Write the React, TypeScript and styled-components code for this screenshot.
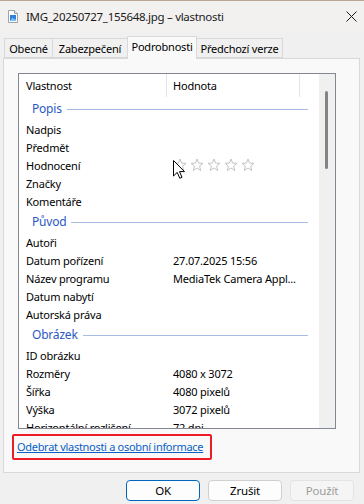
import React from "react";
import styled, { createGlobalStyle } from "styled-components";

const GlobalStyle = createGlobalStyle`
  html, body {
    margin: 0;
    padding: 0;
  }
  body {
    font-family: "Noto Sans", "Segoe UI", sans-serif;
    font-size: 11px;
    color: #000;
    background: #f0f0f0;
  }
`;

type PropRow =
  | { kind: "group"; label: string }
  | { kind: "prop"; name: string; value?: string; stars?: boolean };

const rows: PropRow[] = [
  { kind: "group", label: "Popis" },
  { kind: "prop", name: "Nadpis" },
  { kind: "prop", name: "Předmět" },
  { kind: "prop", name: "Hodnocení", stars: true },
  { kind: "prop", name: "Značky" },
  { kind: "prop", name: "Komentáře" },
  { kind: "group", label: "Původ" },
  { kind: "prop", name: "Autoři" },
  { kind: "prop", name: "Datum pořízení", value: "27.07.2025 15:56" },
  { kind: "prop", name: "Název programu", value: "MediaTek Camera Appl..." },
  { kind: "prop", name: "Datum nabytí" },
  { kind: "prop", name: "Autorská práva" },
  { kind: "group", label: "Obrázek" },
  { kind: "prop", name: "ID obrázku" },
  { kind: "prop", name: "Rozměry", value: "4080 x 3072" },
  { kind: "prop", name: "Šířka", value: "4080 pixelů" },
  { kind: "prop", name: "Výška", value: "3072 pixelů" },
  { kind: "prop", name: "Horizontální rozlišení", value: "72 dpi" },
];

const tabs = [
  { label: "Obecné", width: 49 },
  { label: "Zabezpečení", width: 76 },
  { label: "Podrobnosti", width: 70, active: true },
  { label: "Předchozí verze", width: 87 },
];

const Window = styled.div`
  width: 364px;
  height: 504px;
  display: flex;
  flex-direction: column;
  background: #f0f0f0;
  overflow: hidden;
  position: relative;
  letter-spacing: -0.2px;
`;

const TitleBar = styled.div`
  height: 30px;
  border-top: 1px solid #b8a795;
  background: #f3f1ef;
  display: flex;
  align-items: center;
  padding: 0 7px 0 8px;
  gap: 8px;
`;

const TitleText = styled.div`
  flex: 1;
  color: #1a1a1a;
  font-size: 11.5px;
  letter-spacing: -0.3px;
`;

const TabStrip = styled.div`
  display: flex;
  align-items: flex-end;
  height: 23px;
  margin: 4px 0 0 5px;
  position: relative;
  z-index: 1;
`;

const Tab = styled.div<{ $active?: boolean; $w: number }>`
  box-sizing: border-box;
  width: ${(p) => p.$w}px;
  height: ${(p) => (p.$active ? 23 : 20)}px;
  margin-bottom: ${(p) => (p.$active ? -1 : 0)}px;
  padding-top: 2px;
  display: flex;
  justify-content: center;
  font-size: 11px;
  background: ${(p) => (p.$active ? "#f9f9f9" : "#f0f0f0")};
  border: 1px solid #d9d9d9;
  border-bottom: ${(p) => (p.$active ? "none" : "1px solid #d9d9d9")};
  margin-left: -1px;
  white-space: nowrap;
  color: #000;
`;

const Panel = styled.div`
  box-sizing: border-box;
  margin: 0 4px 0 3px;
  height: 415px;
  border: 1px solid #d9d9d9;
  background: #f9f9f9;
  display: flex;
  flex-direction: column;
  padding: 14px 0 0 14px;
`;

const ListBox = styled.div`
  box-sizing: border-box;
  width: 318px;
  height: 356px;
  border: 1px solid #828790;
  background: #fff;
  display: flex;
  position: relative;
`;

const ListBody = styled.div`
  flex: 1;
  overflow: hidden;
  display: flex;
  flex-direction: column;
`;

const HeaderRow = styled.div`
  display: flex;
  height: 23px;
  flex-shrink: 0;
`;

const HeaderCell = styled.div<{ $w: number; $pad: number }>`
  box-sizing: border-box;
  width: ${(p) => p.$w}px;
  padding-left: ${(p) => p.$pad}px;
  display: flex;
  align-items: center;
  border-right: 1px solid #e5e5e5;
  height: 23px;
`;

const GroupRow = styled.div`
  display: flex;
  align-items: center;
  height: 23px;
  flex-shrink: 0;
  padding: 0 11px 0 13px;
  gap: 5px;
  color: #2a58c6;
  font-size: 12px;
`;

const GroupLine = styled.div`
  flex: 1;
  height: 1px;
  background: #a9bce4;
  margin-top: 1px;
`;

const ItemRow = styled.div`
  display: flex;
  align-items: center;
  height: 18px;
  flex-shrink: 0;
  white-space: nowrap;
`;

const NameCell = styled.div`
  box-sizing: border-box;
  width: 148px;
  padding-left: 7px;
`;

const ValueCell = styled.div`
  padding-left: 6px;
  display: flex;
  align-items: center;
  gap: 3px;
`;

const ScrollTrack = styled.div`
  width: 16px;
  flex-shrink: 0;
  background: #f0f0f0;
  position: relative;
`;

const ScrollThumb = styled.div`
  position: absolute;
  left: 6px;
  top: 17px;
  width: 3px;
  height: 78px;
  border-radius: 2px;
  background: #858585;
`;

const LinkBox = styled.div`
  align-self: flex-start;
  margin: 5px 0 0 -6px;
  border: 2.5px solid #ee1c24;
  border-radius: 2px;
  padding: 3px 7px 4px 3px;
`;

const Link = styled.a`
  color: #0a5fc4;
  text-decoration: underline;
  cursor: pointer;
  white-space: nowrap;
  font-size: 11px;
  letter-spacing: -0.3px;
`;

const ButtonRow = styled.div`
  display: flex;
  justify-content: flex-end;
  gap: 8px;
  padding: 7px 10px 0 0;
`;

const Button = styled.button<{ $w: number; $variant?: "default" | "disabled" }>`
  box-sizing: border-box;
  width: ${(p) => p.$w}px;
  height: 21px;
  font-family: inherit;
  font-size: 11.5px;
  letter-spacing: -0.2px;
  border-radius: 4px;
  padding: 0;
  background: ${(p) => (p.$variant === "disabled" ? "#f5f5f5" : "#fdfdfd")};
  color: ${(p) => (p.$variant === "disabled" ? "#9d9d9d" : "#000")};
  border: 1px solid
    ${(p) =>
      p.$variant === "default" ? "#0067c0" : p.$variant === "disabled" ? "#e3e3e3" : "#d0d0d0"};
`;

const Cursor = styled.svg`
  position: absolute;
  left: 173px;
  top: 160px;
  pointer-events: none;
`;

const FileIcon = () => (
  <svg width="10" height="13" viewBox="0 0 10 13">
    <path d="M0.5 0.5 H6.5 L9.5 3.5 V12.5 H0.5 Z" fill="#fff" stroke="#9aa3ad" />
    <path d="M6.5 0.5 V3.5 H9.5" fill="#e8ecf0" stroke="#9aa3ad" />
    <rect x="2" y="5" width="6" height="6" fill="#2f7fd8" />
    <path d="M2 11 L4.5 7.5 L6 9.5 L7 8.5 L8 10 V11 Z" fill="#7dc1f5" />
  </svg>
);

const CloseIcon = () => (
  <svg width="11" height="11" viewBox="0 0 11 11">
    <path d="M0.5 0.5 L10.5 10.5 M10.5 0.5 L0.5 10.5" stroke="#1a1a1a" strokeWidth="1" />
  </svg>
);

const Star = () => (
  <svg width="14" height="14" viewBox="0 0 14 14">
    <path
      d="M7 1 L8.6 5.1 L13 5.3 L9.6 8.1 L10.7 12.5 L7 10 L3.3 12.5 L4.4 8.1 L1 5.3 L5.4 5.1 Z"
      fill="#fff"
      stroke="#c4c4c4"
      strokeWidth="1"
      strokeLinejoin="round"
    />
  </svg>
);

export default function App() {
  return (
    <Window>
      <GlobalStyle />
      <TitleBar>
        <FileIcon />
        <TitleText>IMG_20250727_155648.jpg – vlastnosti</TitleText>
        <CloseIcon />
      </TitleBar>
      <TabStrip>
        {tabs.map((t) => (
          <Tab key={t.label} $active={t.active} $w={t.width}>
            {t.label}
          </Tab>
        ))}
      </TabStrip>
      <Panel>
        <ListBox>
          <ListBody>
            <HeaderRow>
              <HeaderCell $w={148} $pad={7}>Vlastnost</HeaderCell>
              <HeaderCell $w={133} $pad={6}>Hodnota</HeaderCell>
            </HeaderRow>
            {rows.map((r, i) =>
              r.kind === "group" ? (
                <GroupRow key={i}>
                  {r.label}
                  <GroupLine />
                </GroupRow>
              ) : (
                <ItemRow key={i}>
                  <NameCell>{r.name}</NameCell>
                  <ValueCell>
                    {r.stars
                      ? [0, 1, 2, 3, 4].map((s) => <Star key={s} />)
                      : r.value}
                  </ValueCell>
                </ItemRow>
              )
            )}
          </ListBody>
          <ScrollTrack>
            <ScrollThumb />
          </ScrollTrack>
        </ListBox>
        <LinkBox>
          <Link>Odebrat vlastnosti a osobní informace</Link>
        </LinkBox>
      </Panel>
      <ButtonRow>
        <Button $w={74} $variant="default">OK</Button>
        <Button $w={74}>Zrušit</Button>
        <Button $w={64} $variant="disabled">Použít</Button>
      </ButtonRow>
      <Cursor width="13" height="20" viewBox="0 0 13 20">
        <path
          d="M0.5 0.5 V16 L4.2 12.4 L6.8 18.3 L9 17.3 L6.5 11.6 H11.5 Z"
          fill="#fff"
          stroke="#000"
          strokeWidth="1"
          strokeLinejoin="miter"
        />
      </Cursor>
    </Window>
  );
}
